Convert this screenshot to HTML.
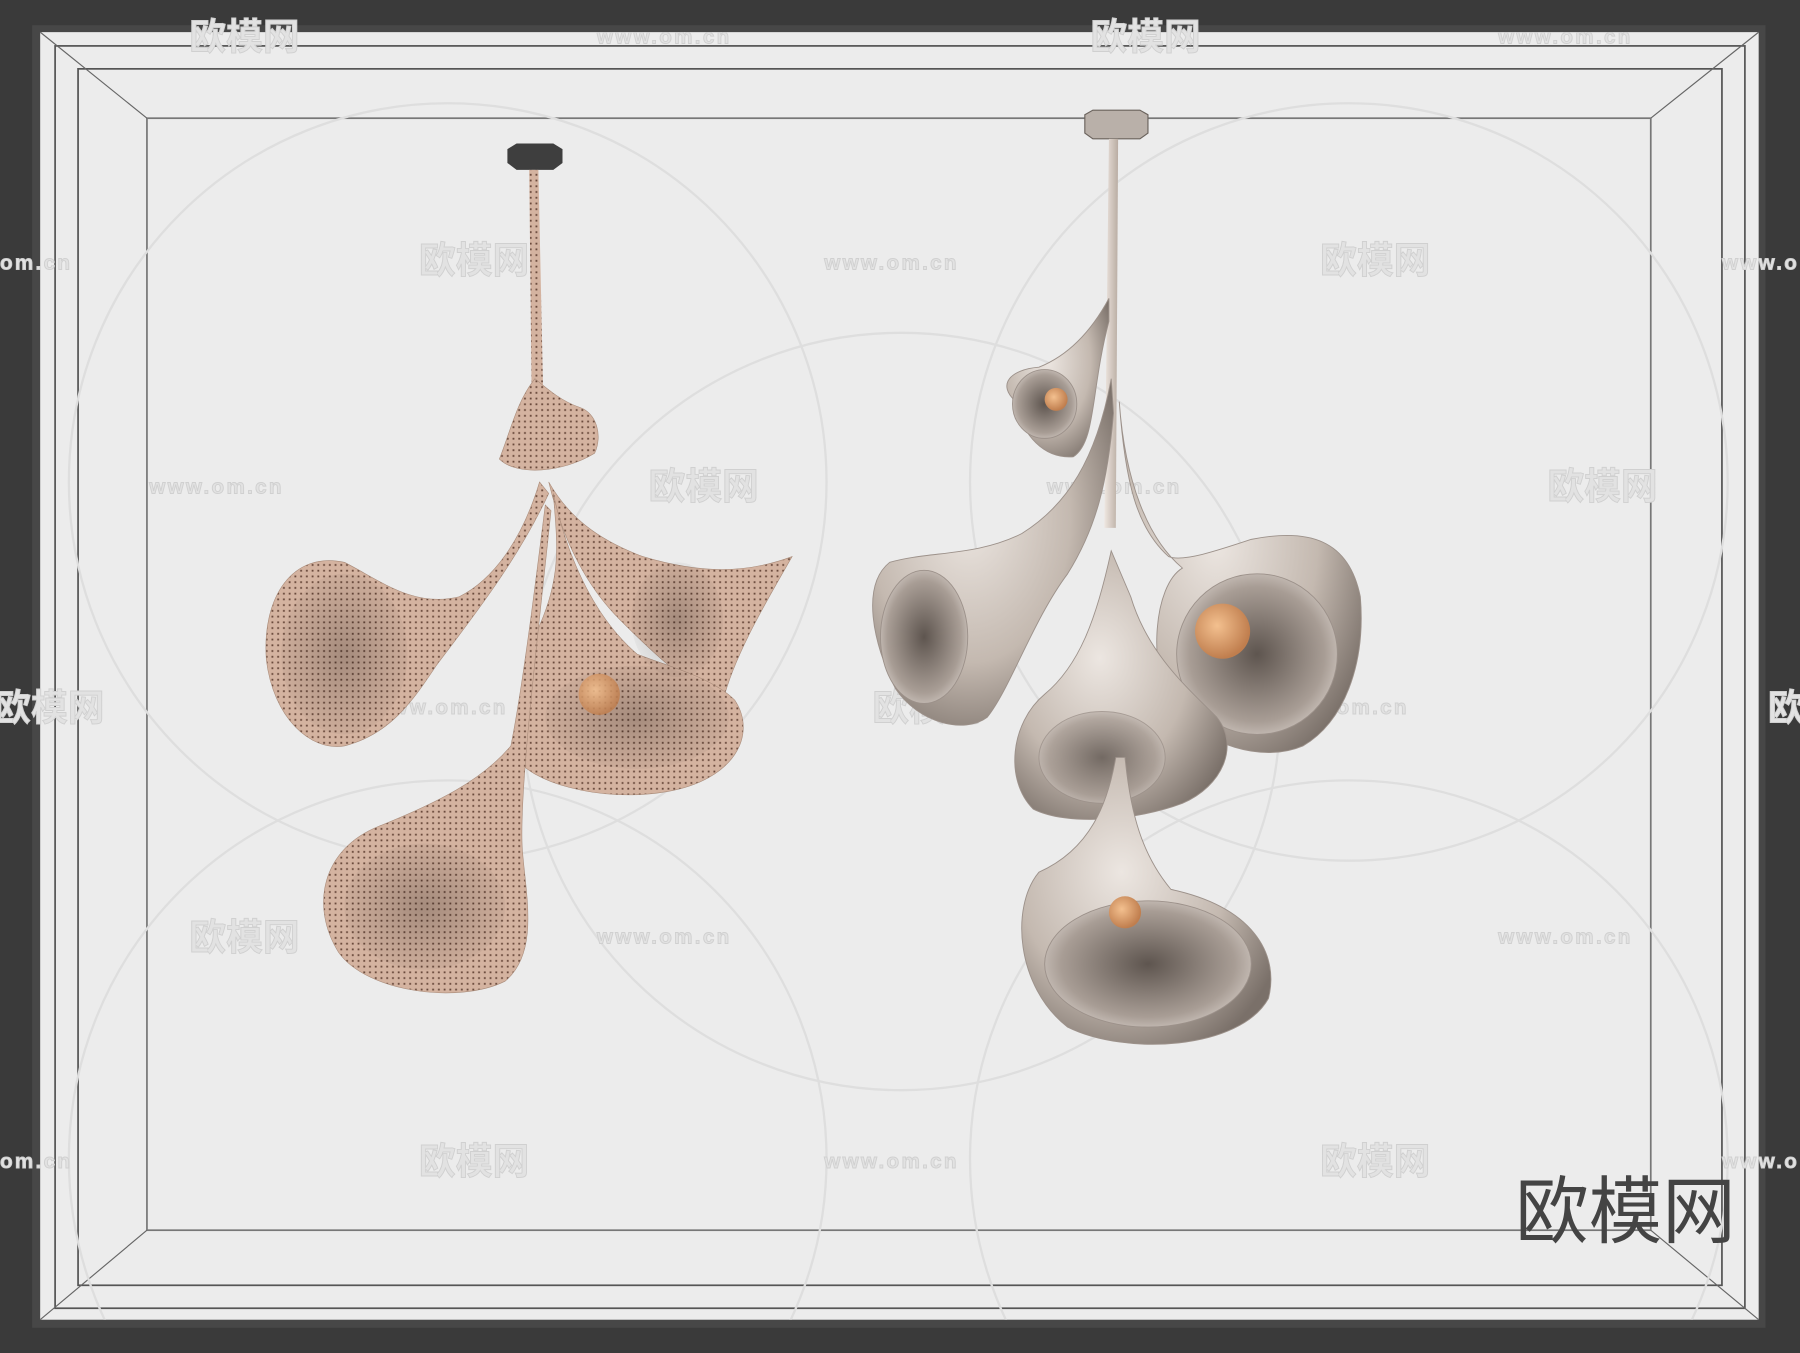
<!DOCTYPE html>
<html><head><meta charset="utf-8"><style>
html,body{margin:0;padding:0;background:#3a3a3a;width:1800px;height:1353px;overflow:hidden}
svg{display:block}
</style></head><body>
<svg width="1800" height="1353" viewBox="0 0 1568 1179" preserveAspectRatio="none" xmlns="http://www.w3.org/2000/svg">
<defs>
<clipPath id="cl"><rect x="35" y="28" width="1497" height="1122"/></clipPath>
<pattern id="dots" width="5" height="5" patternUnits="userSpaceOnUse">
<rect width="5" height="5" fill="#d4b3a0"/><rect x="1.5" y="1.5" width="1.6" height="1.6" fill="#6a4a3c"/>
</pattern>
<radialGradient id="lsh" cx="0.5" cy="0.5" r="0.6">
<stop offset="0" stop-color="#000" stop-opacity="0.22"/><stop offset="1" stop-color="#000" stop-opacity="0"/>
</radialGradient>
<radialGradient id="rb" cx="0.4" cy="0.4" r="0.7">
<stop offset="0" stop-color="#ece6e1"/><stop offset="0.6" stop-color="#c4b9b0"/><stop offset="1" stop-color="#7a7069"/>
</radialGradient>
<radialGradient id="rin" cx="0.5" cy="0.5" r="0.6">
<stop offset="0" stop-color="#5e554f"/><stop offset="0.7" stop-color="#a89d95"/><stop offset="1" stop-color="#ddd5cf"/>
</radialGradient>
<radialGradient id="bulb" cx="0.4" cy="0.4" r="0.6">
<stop offset="0" stop-color="#f3c08f"/><stop offset="1" stop-color="#c07e4e"/>
</radialGradient>
<linearGradient id="rs" x1="0" x2="1"><stop offset="0" stop-color="#efe7e1"/><stop offset="1" stop-color="#b9aca2"/></linearGradient>
</defs>
<rect width="1568" height="1179" fill="#3a3a3a"/>
<rect x="28" y="22" width="1510" height="1135" fill="#474747"/>
<rect x="35" y="28" width="1497" height="1122" fill="#ececec"/>
<g fill="none" stroke="#555" stroke-width="1.5">
<rect x="48" y="40" width="1472" height="1100"/>
<rect x="68" y="60" width="1432" height="1060"/>
<rect x="128" y="103" width="1310" height="969" stroke="#777"/>
<path d="M35 28 L128 103 M1532 28 L1438 103 M35 1150 L128 1072 M1532 1150 L1438 1072" stroke="#666" stroke-width="1"/>
</g>
<g fill="none" stroke="#dedede" stroke-width="2" clip-path="url(#cl)">
<circle cx="390" cy="420" r="330"/><circle cx="1175" cy="420" r="330"/>
<circle cx="390" cy="1010" r="330"/><circle cx="1175" cy="1010" r="330"/>
<circle cx="785" cy="620" r="330"/>
</g>
<g font-family="Liberation Sans,'Noto Sans CJK SC',sans-serif" fill="#e2e2e2" stroke="#d0d0d0" stroke-width="0.8" font-weight="bold">
<g font-size="32">
<text x="165" y="43">欧模网</text><text x="950" y="43">欧模网</text>
<text x="365" y="238">欧模网</text><text x="1150" y="238">欧模网</text>
<text x="565" y="435">欧模网</text><text x="1348" y="435">欧模网</text>
<text x="-5" y="628">欧模网</text><text x="760" y="628">欧模网</text><text x="1540" y="628">欧模网</text>
<text x="165" y="828">欧模网</text><text x="950" y="828">欧模网</text>
<text x="365" y="1023">欧模网</text><text x="1150" y="1023">欧模网</text>
</g>
<g font-size="18" letter-spacing="2">
<text x="520" y="38">www.om.cn</text><text x="1305" y="38">www.om.cn</text>
<text x="0" y="235">om.cn</text><text x="718" y="235">www.om.cn</text><text x="1500" y="235">www.o</text>
<text x="130" y="430">www.om.cn</text><text x="912" y="430">www.om.cn</text>
<text x="325" y="622">www.om.cn</text><text x="1110" y="622">www.om.cn</text>
<text x="520" y="822">www.om.cn</text><text x="1305" y="822">www.om.cn</text>
<text x="0" y="1018">om.cn</text><text x="718" y="1018">www.om.cn</text><text x="1500" y="1018">www.o</text>
</g>
</g>
<!-- LEFT LAMP -->
<polygon points="442,130 450,125 482,125 490,130 490,142 482,148 450,148 442,142" fill="#3e3e3e"/>
<path d="M461 148 L469 148 L473 335 L463 335 Z" fill="url(#dots)"/>
<g fill="url(#dots)" stroke="#a88a78" stroke-width="0.5">
<path d="M466 330 C450 350 445 375 435 400 C450 415 490 412 518 395 C525 380 520 360 505 355 C490 350 478 340 466 330 Z"/>
<path d="M470 420 C455 470 430 505 400 520 C360 530 330 505 300 490 C255 480 228 520 232 575 C238 625 270 655 300 650 C340 640 360 610 380 580 C410 540 450 490 478 430 Z"/>
<path d="M478 420 C495 450 520 470 560 485 C610 500 650 500 690 485 C670 520 640 570 630 610 C600 600 560 560 540 540 C510 510 490 470 478 420 Z"/>
<path d="M482 430 C485 470 490 500 470 545 C455 590 448 640 450 660 C460 680 520 700 580 690 C640 680 660 640 640 610 C620 590 580 580 555 570 C520 540 495 490 482 430 Z"/>
<path d="M475 440 C465 520 455 600 445 650 C420 680 380 700 330 720 C280 740 270 790 295 830 C320 865 400 875 440 855 C470 830 458 780 455 740 C452 690 468 560 480 445 Z"/>
</g>
<ellipse cx="300" cy="570" rx="55" ry="70" fill="url(#lsh)"/>
<ellipse cx="555" cy="625" rx="80" ry="45" fill="url(#lsh)"/>
<ellipse cx="370" cy="790" rx="70" ry="55" fill="url(#lsh)"/>
<ellipse cx="590" cy="540" rx="40" ry="50" fill="url(#lsh)"/>
<circle cx="522" cy="605" r="18" fill="url(#bulb)" opacity="0.85"/>
<!-- RIGHT LAMP -->
<polygon points="945,100 952,96 993,96 1000,100 1000,116 993,121 952,121 945,116" fill="#b9b0a9" stroke="#6a625c" stroke-width="1"/>
<path d="M966 121 L974 121 L972 460 L962 460 Z" fill="url(#rs)"/>
<g stroke="#9c918a" stroke-width="0.8">
<path d="M966 260 C950 290 930 310 905 320 C880 322 868 335 885 350 C890 380 910 400 935 398 C955 385 950 340 966 280 Z" fill="url(#rb)"/>
<ellipse cx="910" cy="352" rx="28" ry="30" fill="url(#rin)"/>
<path d="M968 330 C955 400 930 440 890 465 C850 485 810 480 775 490 C750 510 760 560 780 600 C800 630 840 640 860 625 C880 600 900 540 930 500 C955 460 965 420 970 360 Z" fill="url(#rb)"/>
<ellipse cx="805" cy="555" rx="38" ry="58" fill="url(#rin)"/>
<path d="M975 350 C980 420 1000 470 1030 495 C1005 510 1000 580 1020 615 C1050 650 1100 665 1135 650 C1170 630 1190 580 1185 520 C1175 470 1140 460 1090 470 C1060 480 1030 490 1018 485 C990 460 980 420 975 350 Z" fill="url(#rb)"/>
<ellipse cx="1095" cy="570" rx="70" ry="70" fill="url(#rin)"/>
<path d="M968 480 C955 540 940 580 910 605 C880 630 875 680 900 705 C930 720 990 715 1030 700 C1065 685 1080 650 1060 625 C1035 600 1000 570 985 520 Z" fill="url(#rb)"/>
<ellipse cx="960" cy="660" rx="55" ry="40" fill="url(#rin)" opacity="0.8"/>
<path d="M972 660 C965 700 950 740 905 760 C880 790 885 860 930 895 C980 920 1080 915 1105 870 C1115 830 1090 790 1020 775 C995 745 985 710 980 660 Z" fill="url(#rb)"/>
<ellipse cx="1000" cy="840" rx="90" ry="55" fill="url(#rin)"/>
</g>
<circle cx="1065" cy="550" r="24" fill="url(#bulb)"/>
<circle cx="920" cy="348" r="10" fill="url(#bulb)"/>
<circle cx="980" cy="795" r="14" fill="url(#bulb)"/>
<text x="1320" y="1078" font-family="Liberation Sans,'Noto Sans CJK SC',sans-serif" font-size="64" fill="#444">欧模网</text>
</svg>
</body></html>
